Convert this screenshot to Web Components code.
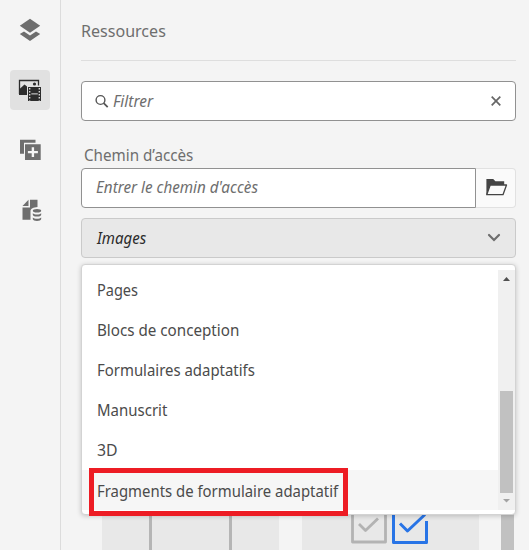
<!DOCTYPE html>
<html lang="fr">
<head>
<meta charset="utf-8">
<title>Ressources</title>
<style>
html,body{margin:0;height:550px;overflow:hidden;background:#f4f4f4}
body{font:17px/40px "Noto Sans","Open Sans",sans-serif;color:#6e6e6e}
</style>
</head>
<body>
<assets-app></assets-app>
<script>
const define = (name, html, init) => customElements.define(name, class extends HTMLElement {
  connectedCallback() {
    if (this.shadowRoot) return;
    const t = document.createElement('template');
    t.innerHTML = html;
    this.attachShadow({ mode: 'open' }).append(t.content.cloneNode(true));
    if (init) init(this, this.shadowRoot);
  }
});

// A single-line label condensed horizontally to the width in its "w" attribute.
define('fit-text', `
<style>:host{display:block;white-space:nowrap;height:40px;line-height:40px}
span{display:inline-block;transform-origin:0 50%}</style><span><slot></slot></span>`,
(host, root) => {
  const w = +host.getAttribute('w');
  host.style.width = w + 'px';
  const s = root.querySelector('span');
  s.style.transform = 'scaleX(' + w / s.offsetWidth + ')';
});

define('rail-button', `
<style>:host{display:flex;width:40px;height:40px;border-radius:4px;color:#6e6e6e}
:host([selected]){background:#e1e1e1;color:#2c2c2c}
::slotted(svg){display:block}</style><slot></slot>`);

define('side-rail', `
<style>:host{display:flex;flex-direction:column;align-items:center;gap:20px;width:60px;padding-top:10px;border-right:1px solid #dcdcdc}</style>
<rail-button><svg width="40" height="40" fill="currentColor"><path d="M20 8.700 30.200 15.700 20 22.700 9.800 15.700z"/><path d="m14 21.500-4.200 2.500L20 31l10.200-7-4.200-2.500L20 25.500z"/></svg></rail-button>
<rail-button selected><svg width="40" height="40"><path d="M9.500 24V10.500h19v5" fill="none" stroke="currentColor" stroke-width="1.300"/><path d="M9 24v-4.500l5.500-5 2.500 2V25H9z" fill="currentColor"/><circle cx="24.500" cy="14" r="1.600" fill="currentColor"/><path d="M18 17h13v14H18z" fill="currentColor"/><path d="M19.700 18v12.500M29.300 18v12.500" stroke="#e1e1e1" stroke-width="1.300" stroke-dasharray="1.500 1.500"/><path d="M21.300 23.900h6.500" stroke="#e1e1e1"/></svg></rail-button>
<rail-button><svg width="40" height="40" fill="currentColor"><path d="M10 9.700h15.500v3H14v11h-4z"/><path fill-rule="evenodd" d="M15 14.300h15.700V30H15zM21.700 17.200v3.700h-3.800v2.400h3.800V27h2.400v-3.700h3.800v-2.400h-3.800v-3.700z"/></svg></rail-button>
<rail-button><svg width="40" height="40" fill="currentColor"><path d="M18.500 9.700V16h-6z"/><path d="M20 9.700h7.500v7.200c-4 .3-7 1.800-7 4.100v8.800h-8V17.500H20z"/><ellipse cx="27" cy="20.700" rx="4.200" ry="1.800"/><path d="M22.800 23.200c1.500 1.700 7 1.700 8.400 0v1.500c0 2.500-8.400 2.500-8.400 0zM22.800 27.500c1.500 1.700 7 1.700 8.400 0v1.600c0 2.500-8.400 2.500-8.400 0z"/></svg></rail-button>`);

define('filter-field', `
<style>:host{display:flex;box-sizing:border-box;height:40px;border:1px solid #919191;border-radius:4px;background:#fff;align-items:center;font-style:italic;padding:0 13px 0 13px}
fit-text{margin:0 auto 0 4px}svg{flex:none}</style>
<svg width="14" height="14" fill="none" stroke="#555" stroke-width="1.400"><circle cx="5.500" cy="6" r="4.400"/><path d="m8.700 9.200 4 4" stroke-width="1.800"/></svg>
<fit-text w="40">Filtrer</fit-text>
<svg width="12" height="12"><path d="m1.700 1.700 8.600 8.600M10.300 1.700 1.700 10.300" stroke="#666" stroke-width="1.700"/></svg>`);

define('path-field', `
<style>:host{display:flex;height:40px;font-style:italic}
div{box-sizing:border-box;height:40px}
.in{width:395px;border:1px solid #919191;border-radius:4px 0 0 4px;background:#fff;padding-left:14px;line-height:38px}
fit-text{margin-top:-2px}
.bt{width:40px;border:1px solid #e1e1e1;border-left:0;border-radius:0 4px 4px 0;background:#fafafa}</style>
<div class="in"><fit-text w="162">Entrer le chemin d'accès</fit-text></div>
<div class="bt"><svg width="39" height="38"><path d="M10.400 25.500V10h6.800l2.200 2.300h8.800v3.800" fill="#444"/><path d="M14.200 16h16.300l-3.500 9.700H10.700z" fill="#fafafa" stroke="#444" stroke-width="1.300" stroke-linejoin="round"/></svg></div>`);

define('select-box', `
<style>:host{display:flex;box-sizing:border-box;height:40px;border:1px solid #cacaca;border-radius:4px;background:#e8e8e8;color:#2c2c2c;font-style:italic;align-items:center;justify-content:space-between;padding:0 14px 0 15px}</style>
<slot></slot><svg width="14" height="10"><path d="m2 2 5 5 5-5" fill="none" stroke="#6e6e6e" stroke-width="2.200" stroke-linecap="round"/></svg>`);

define('menu-item', `
<style>:host{display:block;height:40px;padding-left:15px;color:#4b4b4b}:host([hover]){background:#f6f6f6}
fit-text{margin-top:-1px}</style><slot></slot>`);

define('menu-list', `
<style>:host{display:flex;box-sizing:border-box;width:435px;height:251px;padding:5px 0 4px;background:#fff;border:1px solid #d3d3d3;border-radius:4px;box-shadow:0 1px 5px rgba(0,0,0,.2)}
.items{flex:1}
.bar{width:17px;height:240px;background:#f0f0f0;display:flex;flex-direction:column;align-items:center;justify-content:space-between}
.thumb{width:13px;height:102px;background:#c1c1c1;margin-top:104px}
svg{display:block}
.mark{position:absolute;left:7px;top:203px;width:259px;height:48px;box-sizing:border-box;border:5px solid #ed1c24}</style>
<div class="items"><slot></slot></div>
<div class="bar"><svg width="17" height="17"><path d="m5 11 3.500-4 3.500 4z" fill="#505050"/></svg><div class="thumb"></div><svg width="17" height="17"><path d="m5 6 3.500 3.500L12 6z" fill="#a3a3a3"/></svg></div>
<div class="mark"></div>`);

define('asset-cards', `
<style>:host{display:flex;gap:23px;padding-left:21px;height:60px}
div{width:177px;background:#e8e8e8}.bar{width:13px;margin-left:-1px;background:#c1c1c1}svg{display:block}</style>
<div><svg width="177" height="60"><path d="M48.500 0v60M128.500 0v60" stroke="#b5b5b5" stroke-width="3"/></svg></div>
<div><svg width="177" height="60" fill="none" stroke-linejoin="round"><g stroke="#b3b3b3" stroke-width="2.800"><path d="M50.500 18v34h33V18z"/><path d="m57 34 6.500 6.500L76 28.500"/></g><g stroke="#2874e6" stroke-width="3"><path d="M123 18H91.500v34.500h33V31"/><path d="m98 33.500 7.500 7.500L123 24.500"/></g></svg></div>
<div class="bar"></div>`);

define('assets-panel', `
<style>:host{display:flex;flex-direction:column;width:435px;padding:11px 0 0 20px;position:relative}
hr{width:435px;height:1px;border:0;background:#dedede;margin:9px 0 20px}
.label{margin:14px 0 0 3px;height:33px}
select-box{margin-top:10px}
.second{margin-top:33px}
asset-cards{margin-top:159px}
menu-list{position:absolute;left:20px;top:264px}</style>
<fit-text w="85">Ressources</fit-text>
<hr>
<filter-field></filter-field>
<div class="label"><fit-text w="109">Chemin d’accès</fit-text></div>
<path-field></path-field>
<select-box><fit-text w="49.500">Images</fit-text></select-box>
<select-box class="second"></select-box>
<asset-cards></asset-cards>
<menu-list>
<menu-item><fit-text w="41">Pages</fit-text></menu-item>
<menu-item><fit-text w="142">Blocs de conception</fit-text></menu-item>
<menu-item><fit-text w="158">Formulaires adaptatifs</fit-text></menu-item>
<menu-item><fit-text w="70.500">Manuscrit</fit-text></menu-item>
<menu-item><fit-text w="20.500">3D</fit-text></menu-item>
<menu-item hover><fit-text w="241" style="padding-top:1px">Fragments de formulaire adaptatif</fit-text></menu-item>
</menu-list>`);

define('assets-app', `
<style>:host{display:flex;height:550px;overflow:hidden}</style>
<side-rail></side-rail><assets-panel></assets-panel>`);
</script>
</body>
</html>
